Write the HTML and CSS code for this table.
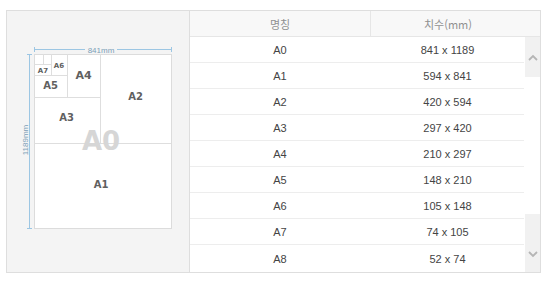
FILE: index.html
```html
<!DOCTYPE html>
<html lang="ko">
<head>
<meta charset="utf-8">
<link rel="stylesheet" href="styles.css">
</head>
<body>
<div class="wrap">
  <div class="panel">
    <svg class="diagram" width="182" height="261" viewBox="0 0 182 261">
      <rect x="27.5" y="43.5" width="137" height="174" fill="#fff" stroke="#dcdcdc"/>
      <g stroke="#dedede" stroke-width="1">
        <line x1="27" y1="132.5" x2="164" y2="132.5"/>
        <line x1="93.5" y1="43" x2="93.5" y2="132"/>
        <line x1="27" y1="86.5" x2="93" y2="86.5"/>
        <line x1="60.5" y1="43" x2="60.5" y2="86"/>
        <line x1="27" y1="64.5" x2="60" y2="64.5"/>
        <line x1="44.5" y1="43" x2="44.5" y2="64"/>
        <line x1="27" y1="53.5" x2="44" y2="53.5"/>
        <line x1="36.5" y1="43" x2="36.5" y2="53"/>
      </g>
      <g stroke="#9cc6e3" stroke-width="1">
        <line x1="27" y1="38.5" x2="78" y2="38.5"/>
        <line x1="110" y1="38.5" x2="164" y2="38.5"/>
        <line x1="27.5" y1="36" x2="27.5" y2="41"/>
        <line x1="164.5" y1="36" x2="164.5" y2="41"/>
        <line x1="22.5" y1="43" x2="22.5" y2="217"/>
        <line x1="20" y1="43.5" x2="25" y2="43.5"/>
        <line x1="20" y1="217.5" x2="25" y2="217.5"/>
      </g>
      <text class="dim" x="94" y="41.5" text-anchor="middle">841mm</text>
      <text class="dim" x="0" y="0" text-anchor="middle" transform="translate(20.5 129) rotate(-90)">1189mm</text>
      <text class="big" x="94" y="139" text-anchor="middle">A0</text>
      <text class="lbl s7" x="36" y="61.5" text-anchor="middle">A7</text>
      <text class="lbl s7" x="52" y="56.5" text-anchor="middle">A6</text>
      <text class="lbl s10" x="43.5" y="78" text-anchor="middle">A5</text>
      <text class="lbl s11" x="76.5" y="68" text-anchor="middle">A4</text>
      <text class="lbl s10" x="59.5" y="110" text-anchor="middle">A3</text>
      <text class="lbl s10" x="128.5" y="89" text-anchor="middle">A2</text>
      <text class="lbl s10" x="94" y="177" text-anchor="middle">A1</text>
    </svg>
  </div>
  <div class="table">
    <div class="thead">
      <div class="th">명칭</div>
      <div class="th th2">치수(mm)</div>
    </div>
    <div class="tbody">
      <div class="rows">
        <div class="row"><span>A0</span><span>841 x 1189</span></div>
        <div class="row"><span>A1</span><span>594 x 841</span></div>
        <div class="row"><span>A2</span><span>420 x 594</span></div>
        <div class="row"><span>A3</span><span>297 x 420</span></div>
        <div class="row"><span>A4</span><span>210 x 297</span></div>
        <div class="row"><span>A5</span><span>148 x 210</span></div>
        <div class="row"><span>A6</span><span>105 x 148</span></div>
        <div class="row"><span>A7</span><span>74 x 105</span></div>
        <div class="row last"><span>A8</span><span>52 x 74</span></div>
      </div>
      <div class="scroll">
        <div class="btn up">
          <svg width="10" height="7" viewBox="0 0 10 7"><polyline points="1,6 5,2 9,6" fill="none" stroke="#b5b5b5" stroke-width="1.8"/></svg>
        </div>
        <div class="track"></div>
        <div class="btn down">
          <svg width="10" height="7" viewBox="0 0 10 7"><polyline points="1,1 5,5 9,1" fill="none" stroke="#b5b5b5" stroke-width="1.8"/></svg>
        </div>
      </div>
    </div>
  </div>
</div>
</body>
</html>
```

FILE: styles.css
```css
html, body {
  margin: 0;
  padding: 0;
  background: #fff;
}
body {
  font-family: "Liberation Sans", Arial, "Noto Sans CJK KR", sans-serif;
}
.wrap {
  display: flex;
  margin: 10px 0 0 6px;
  width: 533px;
  border: 1px solid #dedede;
}
.panel {
  width: 182px;
  height: 261px;
  background: #f4f4f4;
  border-right: 1px solid #dedede;
}
.diagram {
  display: block;
}
.dim {
  font-family: "Liberation Sans", Arial, sans-serif;
  font-size: 8px;
  fill: #7c9fb8;
}
.big {
  font-family: "DejaVu Sans", sans-serif;
  font-weight: bold;
  font-size: 26px;
  fill: #d6d6d6;
}
.lbl {
  font-family: "DejaVu Sans", sans-serif;
  font-weight: bold;
  fill: #606060;
}
.s7 { font-size: 7px; }
.s10 { font-size: 10px; }
.s11 { font-size: 11px; }
.table {
  width: 350px;
  display: flex;
  flex-direction: column;
}
.thead {
  display: grid;
  grid-template-columns: 180px 1fr;
  height: 25px;
  padding-right: 15px;
  background: #f8f8f8;
  border-bottom: 1px solid #e6e6e6;
}
.th {
  display: flex;
  align-items: center;
  justify-content: center;
  font-family: "Noto Sans CJK KR", sans-serif;
  font-size: 11px;
  color: #909090;
}
.th2 {
  border-left: 1px solid #e6e6e6;
}
.tbody {
  display: flex;
  height: 235px;
}
.rows {
  width: 334px;
  display: flex;
  flex-direction: column;
}
.row {
  display: grid;
  grid-template-columns: 180px 1fr;
  height: 25px;
  border-bottom: 1px solid #ededed;
  font-size: 11px;
  color: #444;
}
.row.last {
  border-bottom: none;
  height: 27px;
}
.row span {
  display: flex;
  align-items: center;
  justify-content: center;
}
.row span + span {
  padding-left: 1px;
}
.scroll {
  width: 15px;
  margin-left: 1px;
  display: flex;
  flex-direction: column;
}
.btn {
  background: #f1f1f1;
  display: flex;
  justify-content: center;
}
.btn.up {
  height: 40px;
  align-items: center;
}
.btn.down {
  height: 58px;
  align-items: flex-end;
  padding-bottom: 14px;
  box-sizing: border-box;
}
.track {
  flex: 1;
  background: #fff;
}
```
